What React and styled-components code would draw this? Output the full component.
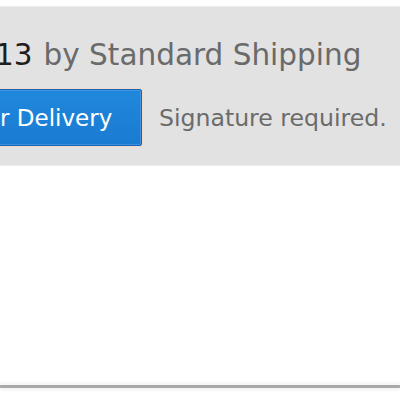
import React from 'react';
import styled, { createGlobalStyle } from 'styled-components';

const GlobalStyle = createGlobalStyle`
  html, body {
    margin: 0;
    padding: 0;
    background: #fff;
    overflow: hidden;
  }
  body {
    font-family: 'DejaVu Sans', 'Liberation Sans', sans-serif;
  }
`;

const Page = styled.div`
  width: 400px;
  height: 400px;
  display: flex;
  flex-direction: column;
  overflow: hidden;
`;

const Panel = styled.section`
  margin-top: 6px;
  height: 160px;
  box-sizing: border-box;
  background: #e2e2e2;
  border-top: 1px solid #ececec;
  border-bottom: 1px solid #ededed;
  display: flex;
  flex-direction: column;
  overflow: hidden;
`;

const Headline = styled.div`
  margin: 30px 0 0 -5px;
  font-size: 29.5px;
  line-height: 36px;
  color: #6a6a6a;
  white-space: nowrap;
`;

const DateText = styled.span`
  color: #1e1e1e;
  margin-right: 11px;
`;

const ActionRow = styled.div`
  margin-top: 16px;
  display: flex;
  align-items: center;
  gap: 17px;
  margin-left: -10px;
`;

const Button = styled.button`
  height: 57px;
  width: 152px;
  box-sizing: border-box;
  padding: 0 0 0 9px;
  text-align: left;
  background: linear-gradient(#2088dc, #1a7bd2);
  border: 1px solid #1765bb;
  border-radius: 2px;
  box-shadow: inset 0 0 0 1px rgba(120, 180, 240, 0.35), 0 0 0 1px #f3d9c6;
  color: #fff;
  font-family: inherit;
  font-size: 23px;
  white-space: nowrap;
`;

const Note = styled.span`
  font-size: 23.6px;
  color: #6b6b6b;
  white-space: nowrap;
`;

const Body = styled.div`
  flex: 1;
`;

const Rule = styled.div`
  height: 3px;
  background: #a9a9a9;
  margin-bottom: 12px;
  box-shadow: 0 -2px 3px rgba(0, 0, 0, 0.06), 0 2px 3px rgba(0, 0, 0, 0.06);
`;

export default function App() {
  return (
    <Page>
      <GlobalStyle />
      <Panel>
        <Headline>
          <DateText>13</DateText>by Standard Shipping
        </Headline>
        <ActionRow>
          <Button>r Delivery</Button>
          <Note>Signature required.</Note>
        </ActionRow>
      </Panel>
      <Body />
      <Rule />
    </Page>
  );
}
